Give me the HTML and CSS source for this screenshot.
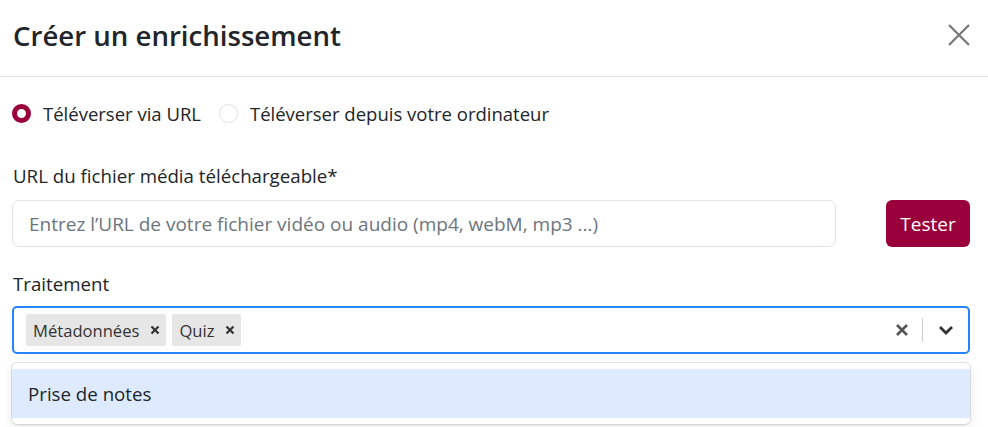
FILE: index.html
```html
<!DOCTYPE html>
<html lang="fr">
<head>
<meta charset="utf-8">
<link rel="stylesheet" href="styles.css">
</head>
<body>
<div class="modal">
  <div class="modal-header">
    <h5 class="modal-title">Créer un enrichissement</h5>
    <button class="btn-close" aria-label="Fermer">
      <svg width="22" height="22" viewBox="0 0 22 22"><path d="M1 1L21 21M21 1L1 21" stroke="#777" stroke-width="2.2" fill="none"/></svg>
    </button>
  </div>
  <div class="modal-body">
    <div class="radios">
      <label class="radio"><span class="radio-dot checked"></span>Téléverser via URL</label>
      <label class="radio"><span class="radio-dot"></span>Téléverser depuis votre ordinateur</label>
    </div>
    <div class="field">
      <div class="field-label">URL du fichier média téléchargeable*</div>
      <div class="input-row">
        <div class="input">Entrez l’URL de votre fichier vidéo ou audio (mp4, webM, mp3 ...)</div>
        <button class="btn-primary">Tester</button>
      </div>
    </div>
    <div class="field">
      <div class="field-label">Traitement</div>
      <div class="select-wrap">
        <div class="select">
          <div class="tags">
            <span class="tag">Métadonnées<span class="tag-x"><svg width="10" height="10" viewBox="0 0 10 10"><path d="M1.5 1.5L8.5 8.5M8.5 1.5L1.5 8.5" stroke="#333" stroke-width="2.2"/></svg></span></span>
            <span class="tag">Quiz<span class="tag-x"><svg width="10" height="10" viewBox="0 0 10 10"><path d="M1.5 1.5L8.5 8.5M8.5 1.5L1.5 8.5" stroke="#333" stroke-width="2.2"/></svg></span></span>
          </div>
          <div class="indicators">
            <span class="ind-clear"><svg width="14" height="14" viewBox="0 0 14 14"><path d="M2 2L12 12M12 2L2 12" stroke="#555" stroke-width="2.6"/></svg></span>
            <span class="ind-sep"></span>
            <span class="ind-chevron"><svg width="16" height="10" viewBox="0 0 16 10"><path d="M2 2L8 8L14 2" stroke="#333" stroke-width="2.8" fill="none"/></svg></span>
          </div>
        </div>
        <div class="menu">
          <div class="option focused">Prise de notes</div>
        </div>
      </div>
    </div>
  </div>
</div>
</body>
</html>
```
FILE: styles.css
```css
* { box-sizing: border-box; }
html, body { margin: 0; padding: 0; background: #fff; }
body {
  font-family: "Open Sans", "Noto Sans", sans-serif;
  color: #212529;
  font-size: 18.7px;
  width: 988px;
  height: 427px;
  overflow: hidden;
}
.modal { width: 988px; }
.modal-header {
  height: 77px;
  border-bottom: 1px solid #dee2e6;
  display: flex;
  align-items: center;
  justify-content: space-between;
  padding: 0 18px 7px 13px;
}
.modal-title {
  margin: 0;
  font-size: 27.6px;
  font-weight: 600;
  color: #212529;
}
.btn-close {
  border: 0;
  background: none;
  padding: 0;
  width: 22px;
  height: 22px;
  display: flex;
}
.modal-body { padding: 0 18px 0 12px; }
.radios {
  display: flex;
  gap: 18px;
  height: 72px;
  align-items: center;
}
.radio {
  display: flex;
  align-items: center;
  gap: 12px;
  font-size: 18.5px;
  color: #212529;
}
.radio-dot {
  width: 19px;
  height: 19px;
  border-radius: 50%;
  border: 1px solid #dee2e6;
  background: #fff;
}
.radio-dot.checked {
  border: 5.5px solid #9a003b;
  background: #fff;
}
.field { display: flex; flex-direction: column; }
.field-label {
  font-size: 18.7px;
  height: 26px;
  line-height: 26px;
  margin-top: 14px;
  margin-bottom: 11px;
  padding-left: 1px;
}
.input-row {
  display: flex;
  align-items: center;
  gap: 50px;
}
.input {
  flex: 1;
  height: 47px;
  border: 1px solid #dee2e6;
  border-radius: 7px;
  padding: 0 16px;
  display: flex;
  align-items: center;
  color: #6c757d;
  font-size: 19px;
}
.btn-primary {
  width: 84px;
  height: 47px;
  border: 0;
  border-radius: 6px;
  background: #9a003b;
  color: #fff;
  font-family: inherit;
  font-size: 19px;
  font-weight: 500;
  padding: 0;
}
.field + .field .field-label { margin-top: 24px; margin-bottom: 9px; }
.select-wrap { position: relative; }
.select {
  height: 48px;
  border: 2px solid #2684ff;
  border-radius: 5px;
  display: flex;
  align-items: center;
  padding: 0 0 0 12px;
}
.tags { flex: 1; display: flex; gap: 6px; }
.tag {
  display: flex;
  align-items: center;
  background: #e6e6e6;
  border-radius: 2px;
  height: 32px;
  padding: 0 0 0 7px;
  font-size: 16.6px;
  color: #333;
}
.tag-x {
  display: flex;
  align-items: center;
  justify-content: center;
  width: 26px;
  padding-left: 5px;
  margin-right: 1px;
}
.indicators { display: flex; align-items: center; height: 100%; }
.ind-clear { width: 46px; display: flex; justify-content: center; padding-left: 6px; }
.ind-sep { width: 1px; height: 24px; background: #ccc; }
.ind-chevron { width: 45px; display: flex; justify-content: center; }
.menu {
  position: absolute;
  left: 0; right: 0;
  top: 57px;
  background: #fff;
  border-radius: 5px;
  box-shadow: 0 0 0 1px rgba(0,0,0,0.1), 0 4px 11px rgba(0,0,0,0.1);
  padding: 6px 0;
}
.option {
  height: 49px;
  display: flex;
  align-items: center;
  padding: 0 16px;
  font-size: 18.7px;
  color: #212529;
}
.option.focused { background: #deebff; }
```
